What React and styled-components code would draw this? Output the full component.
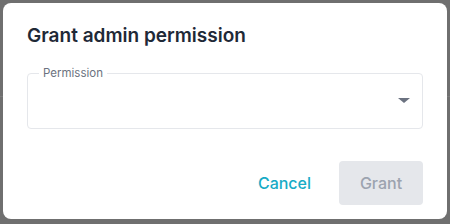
import styled, { createGlobalStyle } from "styled-components";

const GlobalStyle = createGlobalStyle`
  html, body {
    margin: 0;
    padding: 0;
    background: #6f6f6f;
    font-family: Inter, "Noto Sans", sans-serif;
  }
`;

const Backdrop = styled.div`
  width: 450px;
  height: 224px;
  box-sizing: border-box;
  padding: 3px;
  background: linear-gradient(
    to bottom,
    #6f6f6f 0,
    #6f6f6f 96px,
    #7c7c7c 96px,
    #7c7c7c 97px,
    #6f6f6f 97px
  );
`;

const Dialog = styled.div`
  width: 444px;
  height: 216px;
  box-sizing: border-box;
  background: #ffffff;
  border-radius: 8px;
  padding: 19px 24px 14px;
  display: flex;
  flex-direction: column;
`;

const Title = styled.h2`
  margin: 0;
  font-size: 19px;
  line-height: 28px;
  font-weight: 600;
  color: #1f2937;
`;

const Field = styled.fieldset`
  margin: 16px 0 0;
  padding: 0 12px 7px;
  box-sizing: border-box;
  border: 1px solid #e5e7eb;
  border-radius: 4px;
`;

const Legend = styled.legend`
  margin-left: -1px;
  padding: 0 4px;
  font-size: 11.5px;
  line-height: 14px;
  color: #6b7280;
`;

const Control = styled.div`
  height: 41px;
  display: flex;
  align-items: center;
  justify-content: flex-end;
`;

const Arrow = styled.span`
  width: 0;
  height: 0;
  border-left: 6px solid transparent;
  border-right: 6px solid transparent;
  border-top: 5px solid #6b7280;
`;

const Actions = styled.div`
  margin-top: auto;
  display: flex;
  justify-content: flex-end;
  align-items: center;
  gap: 16px;
`;

const Button = styled.button`
  height: 44px;
  padding: 0 12px;
  border: none;
  border-radius: 4px;
  font-family: Inter, "Noto Sans", sans-serif;
  font-size: 16px;
  font-weight: 500;
  background: ${(p) => (p.$primary ? "#e5e7eb" : "transparent")};
  color: ${(p) => (p.$primary ? "#9ca3af" : "#17abc6")};
  min-width: ${(p) => (p.$primary ? "84px" : "auto")};
`;

export default function App() {
  return (
    <>
      <GlobalStyle />
      <Backdrop>
        <Dialog>
          <Title>Grant admin permission</Title>
          <Field>
            <Legend>Permission</Legend>
            <Control>
              <Arrow />
            </Control>
          </Field>
          <Actions>
            <Button>Cancel</Button>
            <Button $primary disabled>
              Grant
            </Button>
          </Actions>
        </Dialog>
      </Backdrop>
    </>
  );
}
